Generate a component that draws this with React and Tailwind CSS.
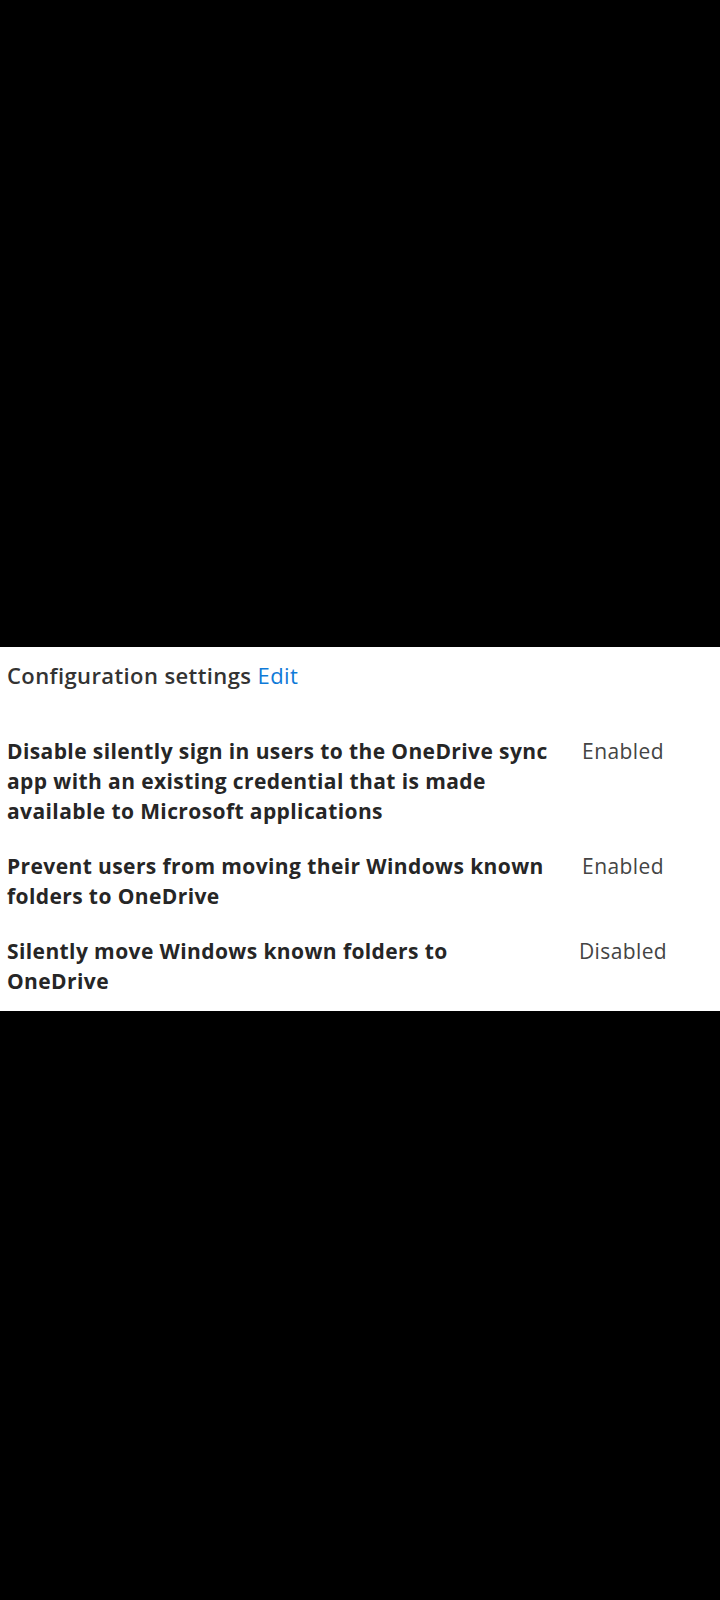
export default function App() {
  const rows = [
    {
      lines: [
        "Disable silently sign in users to the OneDrive sync",
        "app with an existing credential that is made",
        "available to Microsoft applications",
      ],
      value: "Enabled",
    },
    {
      lines: ["Prevent users from moving their Windows known", "folders to OneDrive"],
      value: "Enabled",
    },
    {
      lines: ["Silently move Windows known folders to", "OneDrive"],
      value: "Disabled",
    },
  ];
  return (
    <div
      className="h-[1600px] bg-black pt-[647px]"
      style={{ fontFamily: '"Open Sans", "Noto Sans", sans-serif' }}
    >
      <div className="bg-white pl-[7px] pt-[14px] pb-[15px]">
        <div className="text-[22px] leading-[28px] tracking-[0.4px] font-semibold text-[#333333]">
          Configuration settings <span className="font-normal text-[#0f7ad8]">Edit</span>
        </div>
        <div className="mt-[47px] flex flex-col gap-[25px]">
          {rows.map((r, i) => (
            <div key={i} className="flex">
              <div className="w-[541px] text-[21px] leading-[30px] tracking-[0.4px] font-bold text-[#262626]">
                {r.lines.map((l, j) => (
                  <div key={j} className="whitespace-nowrap">
                    {l}
                  </div>
                ))}
              </div>
              <div className="w-[150px] text-center text-[21px] leading-[30px] tracking-[0.4px] text-[#444444]">
                {r.value}
              </div>
            </div>
          ))}
        </div>
      </div>
    </div>
  );
}
